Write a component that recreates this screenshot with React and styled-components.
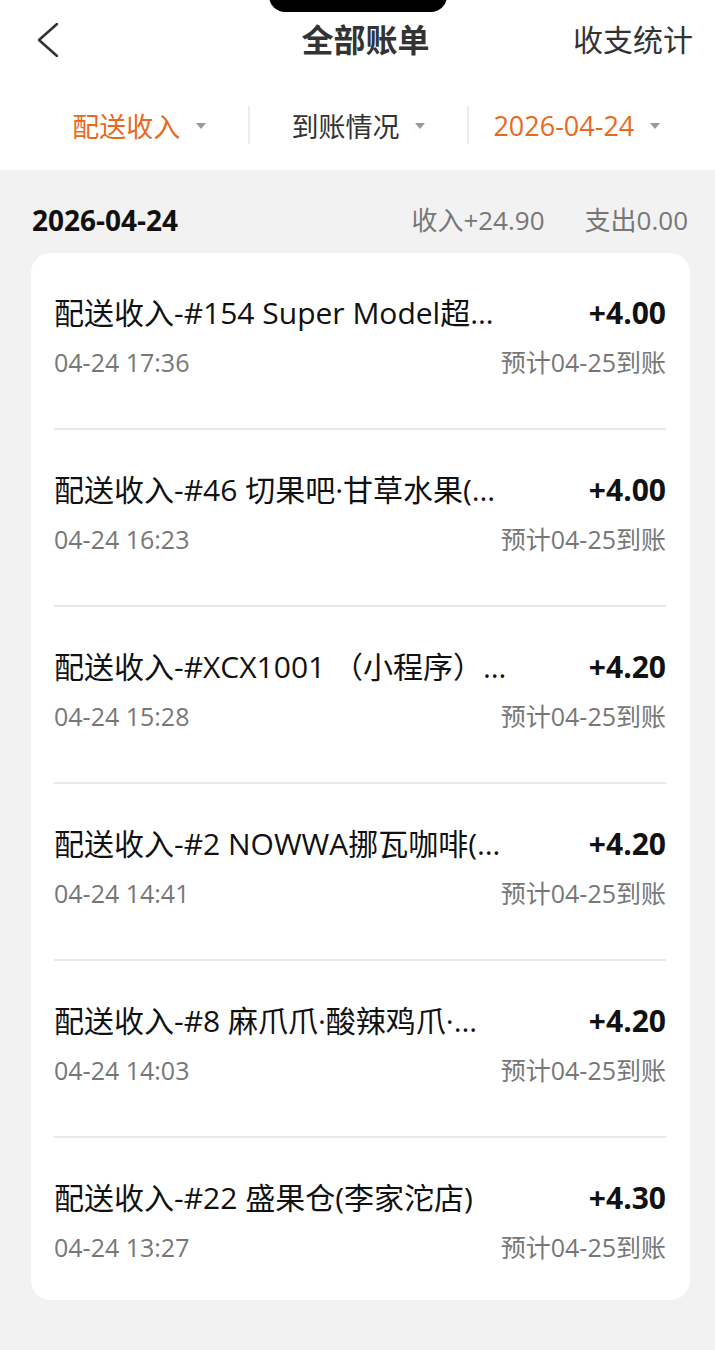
import React from 'react'
import styled, { createGlobalStyle } from 'styled-components'

const GlobalStyle = createGlobalStyle`
  html, body {
    margin: 0;
    padding: 0;
    background: #f2f2f2;
  }
  body {
    font-family: "Open Sans", "Noto Sans CJK SC", sans-serif;
    -webkit-font-smoothing: antialiased;
  }
  * { box-sizing: border-box; }
`

const Page = styled.div`
  position: relative;
  min-height: 100vh;
  background: #f2f2f2;
  padding-bottom: 40px;
`

const Notch = styled.div`
  position: absolute;
  top: -20px;
  left: 50%;
  transform: translateX(-50%);
  width: 178px;
  height: 32px;
  border-radius: 16px;
  background: #000;
`

const TopBar = styled.div`
  height: 80px;
  background: #fff;
  display: grid;
  grid-template-columns: 1fr auto 1fr;
  align-items: center;
  padding: 0 22px 0 38px;
`

const BackButton = styled.div`
  display: flex;
  align-items: center;
  color: #333;
`

const Title = styled.div`
  font-size: 32px;
  font-weight: 700;
  color: #333;
  line-height: 40px;
`

const RightAction = styled.div`
  justify-self: end;
  font-size: 30px;
  color: #333;
  line-height: 40px;
`

const FilterBar = styled.div`
  height: 90px;
  background: #fff;
  display: grid;
  grid-template-columns: repeat(3, 1fr);
  align-items: center;
  padding: 0 30px;
`

const FilterItem = styled.div`
  height: 38px;
  display: flex;
  align-items: center;
  justify-content: center;
  gap: 16px;
  font-size: 27px;
  color: ${p => (p.$active ? '#e8691d' : '#333')};

  & + & {
    border-left: 2px solid #ededed;
  }
`

const Caret = styled.span`
  width: 0;
  height: 0;
  border-left: 5px solid transparent;
  border-right: 5px solid transparent;
  border-top: 6px solid #999;
  margin-top: 2px;
`

const DateHeader = styled.div`
  display: flex;
  align-items: center;
  justify-content: space-between;
  padding: 36px 27px 19px 32px;
  line-height: 28px;
`

const DateText = styled.div`
  font-size: 28px;
  font-weight: 700;
  color: #111;
`

const Summary = styled.div`
  display: flex;
  gap: 40px;
  font-size: 26px;
  color: #777;
`

const Card = styled.div`
  margin: 0 25px 0 31px;
  background: #fff;
  border-radius: 20px;
  padding: 0 24px 0 23px;
`

const Row = styled.div`
  padding: 42px 0 51px;
  border-bottom: 2px solid #e8e8e8;

  &:last-child {
    border-bottom: none;
    padding-bottom: 38px;
  }
`

const MainLine = styled.div`
  display: flex;
  align-items: center;
  justify-content: space-between;
  gap: 24px;
  line-height: 36px;
  height: 36px;
`

const ItemName = styled.div`
  font-size: 30px;
  color: #111;
  white-space: nowrap;
`

const Amount = styled.div`
  font-size: 30px;
  font-weight: 700;
  color: #111;
`

const SubLine = styled.div`
  display: flex;
  justify-content: space-between;
  margin-top: 16px;
  line-height: 30px;
  font-size: 25px;
  color: #777;
`

const records = [
  { name: '配送收入-#154 Super Model超…', amount: '+4.00', time: '04-24 17:36' },
  { name: '配送收入-#46 切果吧·甘草水果(…', amount: '+4.00', time: '04-24 16:23' },
  { name: '配送收入-#XCX1001 （小程序）…', amount: '+4.20', time: '04-24 15:28' },
  { name: '配送收入-#2 NOWWA挪瓦咖啡(…', amount: '+4.20', time: '04-24 14:41' },
  { name: '配送收入-#8 麻爪爪·酸辣鸡爪·…', amount: '+4.20', time: '04-24 14:03' },
  { name: '配送收入-#22 盛果仓(李家沱店)', amount: '+4.30', time: '04-24 13:27' },
]

export default function App() {
  return (
    <Page>
      <GlobalStyle />
      <Notch />
      <TopBar>
        <BackButton>
          <svg width="20" height="34" viewBox="0 0 20 34" fill="none">
            <polyline points="19,1 1,17 19,33" stroke="#333" strokeWidth="2.6" strokeLinecap="round" strokeLinejoin="round" />
          </svg>
        </BackButton>
        <Title>全部账单</Title>
        <RightAction>收支统计</RightAction>
      </TopBar>

      <FilterBar>
        <FilterItem $active>配送收入<Caret /></FilterItem>
        <FilterItem>到账情况<Caret /></FilterItem>
        <FilterItem $active>2026-04-24<Caret /></FilterItem>
      </FilterBar>

      <DateHeader>
        <DateText>2026-04-24</DateText>
        <Summary>
          <span>收入+24.90</span>
          <span>支出0.00</span>
        </Summary>
      </DateHeader>

      <Card>
        {records.map((r, i) => (
          <Row key={i}>
            <MainLine>
              <ItemName>{r.name}</ItemName>
              <Amount>{r.amount}</Amount>
            </MainLine>
            <SubLine>
              <span>{r.time}</span>
              <span>预计04-25到账</span>
            </SubLine>
          </Row>
        ))}
      </Card>
    </Page>
  )
}
